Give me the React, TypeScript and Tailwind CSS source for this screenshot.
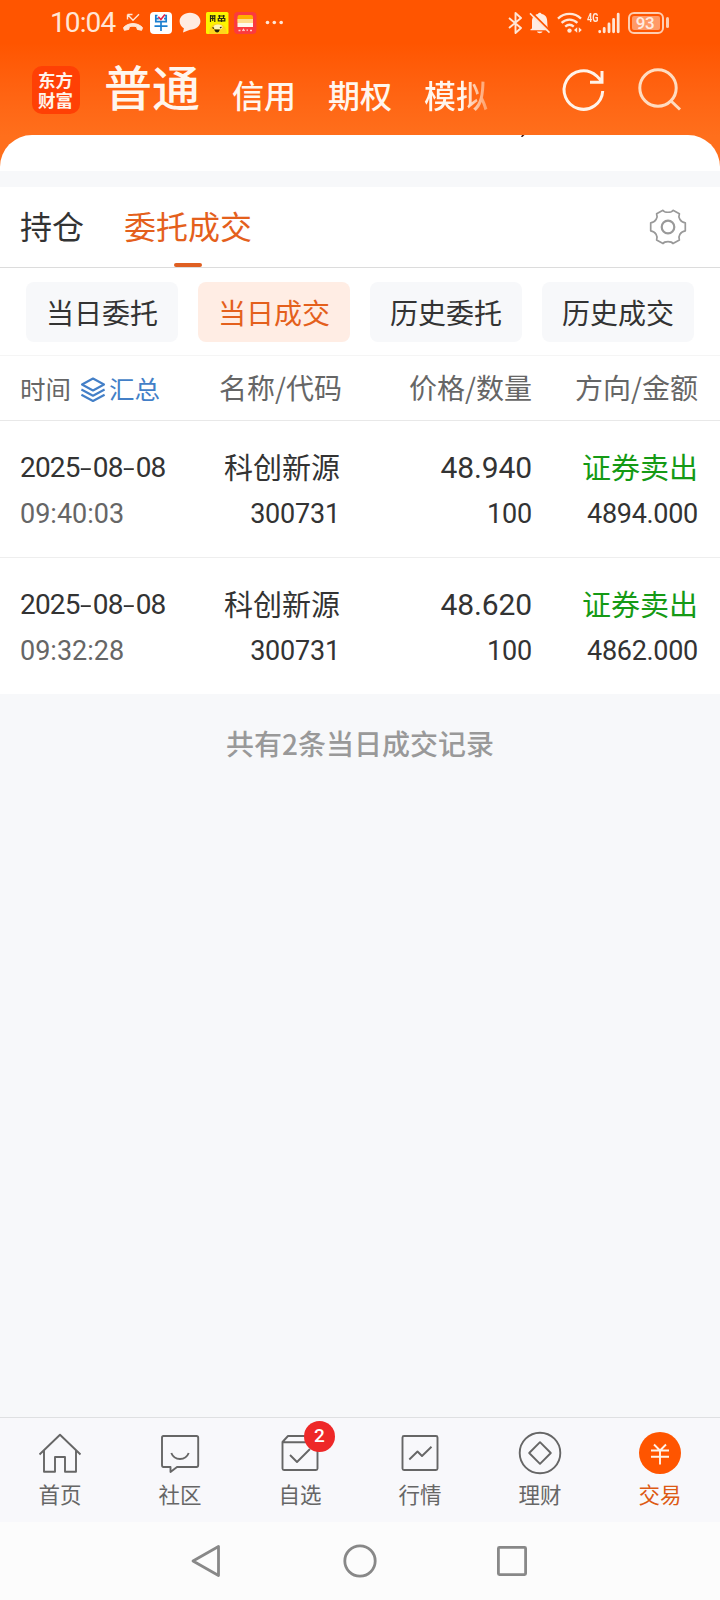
import React, { useState } from 'react';

interface Trade {
    id: number;
    date: string;
    time: string;
    name: string;
    code: string;
    price: string;
    amount: string;
    direction: string;
    total: string;
}

const TRADES: Trade[] = [
    { id: 1, date: '2025-08-08', time: '09:40:03', name: '科创新源', code: '300731', price: '48.940', amount: '100', direction: '证券卖出', total: '4894.000' },
    { id: 2, date: '2025-08-08', time: '09:32:28', name: '科创新源', code: '300731', price: '48.620', amount: '100', direction: '证券卖出', total: '4862.000' },
];

const FILTERS = ['当日委托', '当日成交', '历史委托', '历史成交'];

function StatusBar() {
    return (
        <div className="flex h-[45px] items-center pl-[50px] pr-[51px] text-[#ffe6d6]">
            <span className="font-['Roboto'] text-[28px] leading-[45px] w-[67px] tracking-[-0.9px] whitespace-nowrap">10:04</span>

            {/* Missed call */}
            <svg className="ml-[5px] shrink-0" width="22" height="20" viewBox="0 0 22 20" fill="none">
                <path d="M5.5 1.5v5M5.500 1.500h5M5.800 1.800l5.200 5.400 6-6" stroke="currentColor" strokeWidth="1.400" />
                <path d="M1.500 14.600c4.800-5.400 14.200-5.400 19 0l-.9 2.700-4.300-.9-.7-2.600c-2.300-.8-4.900-.8-7.200 0l-.7 2.600-4.300.9z" fill="currentColor" stroke="currentColor" strokeLinejoin="round" />
            </svg>

            {/* Order app */}
            <svg className="ml-[6px] shrink-0" width="22" height="22" viewBox="0 0 22 22" fill="none">
                <rect width="22" height="22" rx="4" fill="#fff" />
                <path d="M7.500 3.500H5.800v6.200h10.400V3.500h-1.400M5.800 6.600h3M14 6.600h2.200M4.500 14.200h13M11 9.700v9.300" stroke="#1b7fd0" strokeWidth="1.700" />
                <path d="M8.300 4.800l2.600 2.700 4-5" stroke="#e2224e" strokeWidth="1.600" />
            </svg>

            {/* Chat bubble */}
            <svg className="ml-[7px] shrink-0" width="22" height="21" viewBox="0 0 22 21">
                <path d="M11 .8c5.800 0 10.400 3.700 10.400 8.500s-4.600 8.500-10.400 8.500L4 20.600l.9-4.300C2.200 14.800.6 12.200.6 9.300.6 4.500 5.200.8 11 .8z" fill="#ffece2" />
            </svg>

            {/* Yellow mascot app */}
            <svg className="ml-[5px] shrink-0" width="23" height="22" viewBox="0 0 23 22" fill="none">
                <rect width="22.500" height="22" rx="1.500" fill="#fdf500" />
                <path d="M4.500 3v7M4.500 3.800h5M8.800 3v7M6.700 4v5M4.500 6.500h4M12 4h7M13.500 3v3M17.500 3v3M12.300 6.500h6.500v2.300h-6.500zM15.500 6v4" stroke="#2b2a10" strokeWidth="1.200" />
                <path d="M3 22c0-6 3-10.500 8.500-10.500S21 15.500 21 22z" fill="#ffd51c" />
                <ellipse cx="12" cy="15" rx="4.500" ry="2.500" fill="#fff7b8" />
                <path d="M6.500 15.500l1.500 1M14 16l1.500-1M9 18c1.200 2.600 3.200 2.600 4 0z" stroke="#26200a" strokeWidth="1.200" fill="#26200a" />
            </svg>

            {/* Red wallet app */}
            <svg className="ml-[5px] shrink-0" width="23" height="22" viewBox="0 0 23 22" fill="none">
                <rect width="22.500" height="22" rx="4" fill="#fb3a3e" />
                <path d="M3.500 10V5a2 2 0 0 1 2-2h11.500a2 2 0 0 1 2 2v5z" fill="#ffb000" />
                <rect x="3.500" y="7" width="15.500" height="4" fill="#ffdc8c" />
                <rect x="3.500" y="11" width="15.500" height="4" fill="#fff8ec" />
                <path d="M4.500 18.500h2M8.500 19l1-1.500 1 1.500M12.500 18.200h1.500M16 18.500h2" stroke="#ffd0cf" strokeWidth="1.300" />
            </svg>

            <svg className="ml-[8px] shrink-0" width="19" height="5" viewBox="0 0 19 5" fill="currentColor">
                <circle cx="2.500" cy="2.500" r="1.800" />
                <circle cx="9.300" cy="2.500" r="1.800" />
                <circle cx="16.200" cy="2.500" r="1.800" />
            </svg>

            <div className="ml-auto flex items-center">
                {/* Bluetooth */}
                <svg width="15" height="22" viewBox="0 0 15 22" fill="none" stroke="currentColor" strokeWidth="1.900" strokeLinejoin="round">
                    <path d="M1 6l12 10-5.500 5V1l5.500 5L1 16" />
                </svg>
                {/* Muted bell */}
                <svg className="ml-[6px]" width="22" height="22" viewBox="0 0 22 22" fill="none">
                    <path d="M3 16.500V9.200C3 5 5.500 2.600 9 2c.5-1.600 3-1.600 3.600 0 3.500.6 5.600 3.200 5.600 7.200l.3 5.300 1.200 2.800v1H1.500v-1z" fill="#ffece2" />
                    <path d="M8 19.500h5.500c-.6 2.200-4.900 2.200-5.500 0z" fill="#ffece2" />
                    <path d="M2.400.4l19 19" stroke="#ff5500" strokeWidth="2" />
                    <path d="M1 1.400l19.500 19.200" stroke="currentColor" strokeWidth="1.500" />
                </svg>
                {/* Wifi */}
                <svg className="ml-[6px]" width="25" height="22" viewBox="0 0 25 22" fill="none" stroke="currentColor">
                    <path d="M1 6.600c6.500-6.200 16.500-6.200 23 0M4.600 10.800c4.600-4.300 11.200-4.300 15.800 0M8.200 14.600c2.600-2.300 6-2.300 8.600 0" strokeWidth="2.300" />
                    <circle cx="12.500" cy="18.600" r="2.200" fill="currentColor" stroke="none" />
                    <path d="M20.200 15.300v5.400l-3.200-2.700zM21.800 15.300v5.400l3-2.700z" fill="currentColor" stroke="none" />
                </svg>
                {/* 4G signal */}
                <span className="ml-[5px] -mt-[10px] font-['Roboto'] text-[13px] leading-[13px] font-bold w-[11px] whitespace-nowrap inline-block origin-left scale-x-[0.700]">4G</span>
                <svg width="22" height="22" viewBox="0 0 22 22" stroke="currentColor" strokeWidth="2.800" strokeLinecap="round">
                    <path d="M1.700 19.500v.3M6.200 16.500v3.300M11 12v7.800M15.600 7.500v12.300M20.200 2.200v17.600" />
                </svg>
                {/* Battery */}
                <div className="ml-[8px] flex items-center">
                    <div className="flex h-[22px] w-[36px] items-center justify-center rounded-[6px] border-2 border-[#ffcdb0] p-[2px]">
                        <span className="flex h-[14px] w-[28px] items-center justify-center rounded-[2px] bg-[#ff9a67] pr-[2px] font-['Roboto'] text-[17px] leading-[14px] font-medium tracking-[-0.500px] text-[#ffece2]">93</span>
                    </div>
                    <div className="ml-[2px] h-[11px] w-[3px] rounded-full bg-[#ffcdb0]"></div>
                </div>
            </div>
        </div>
    );
}

function Header() {
    return (
        <div className="bg-linear-to-b from-[#ff5500] from-25% to-[#ff6f1c] to-80% h-[171px] flex flex-col">
            <StatusBar />
            <div className="flex h-[90px] pl-[32px]">
                <div className="mt-[21px] flex h-[48px] w-[48px] shrink-0 items-center justify-center rounded-[10px] bg-[#ff4005]">
                    <span className="w-[36px] break-all text-[17.500px] leading-[20px] font-bold text-[#fff3ea]">东方财富</span>
                </div>
                <div className="ml-[24px] flex items-start text-[#fff6ee]">
                    <span className="mt-[10px] text-[48px] leading-[60px] font-medium">普通</span>
                    <span className="ml-[32px] mt-[29px] text-[32px] leading-[40px] font-medium">信用</span>
                    <span className="ml-[32px] mt-[29px] text-[32px] leading-[40px] font-medium">期权</span>
                    <span className="ml-[32px] mt-[29px] text-[32px] leading-[40px] font-medium bg-linear-to-r from-[#fff6ee] from-60% to-[#ff9a60] bg-clip-text text-transparent">模拟</span>
                </div>
                <svg className="ml-[72px] mt-[21px]" width="46" height="48" viewBox="0 0 46 48" fill="none" stroke="#fff3ea" strokeWidth="3">
                    <path d="M42.700 25A19.300 19.300 0 1 1 36.500 9.800L42 15.500M42 5V16.300H30" />
                </svg>
                <svg className="ml-[30px] mt-[21px]" width="46" height="48" viewBox="0 0 46 48" fill="none" stroke="#ffdcc0" strokeWidth="3">
                    <circle cx="22" cy="22" r="18.200" />
                    <path d="M34.500 34.500L44 43.500" />
                </svg>
            </div>
            <div className="relative h-[36px] rounded-t-[32px] bg-white">
                <svg className="absolute left-[521px] top-0" width="4" height="2" viewBox="0 0 4 2">
                    <path d="M1 0h2.500L1.500 2H0z" fill="#4a1c10" />
                </svg>
            </div>
        </div>
    );
}

function GearIcon() {
    return (
        <svg width="38" height="38" viewBox="0 0 38 38" fill="none" stroke="#999" strokeWidth="1.700" strokeLinejoin="round">
            <path d="M14 2.300C15.500 4.900 22.500 4.900 24 2.300L30.400 5.800C28.800 9.500 31.500 14.300 36.300 14.800V22.900C31.500 23.400 28.800 28.200 30.400 32L24 35.500C22.500 32.900 15.500 32.900 14 35.500L7.600 32C9.200 28.200 6.500 23.400 1.700 22.900V14.800C6.500 14.300 9.200 9.500 7.600 5.800Z" />
            <circle cx="19" cy="19" r="6.300" strokeWidth="2.200" />
        </svg>
    );
}

function LayersIcon() {
    return (
        <svg width="26" height="26" viewBox="0 0 26 26" fill="none" stroke="#437fc7" strokeWidth="2.100" strokeLinejoin="round">
            <path d="M13 1.500L24 7.500 13 13.500 2 7.500Z" />
            <path d="M1.400 12.500L13 18.700 24.600 12.500M1.400 17.800L13 24 24.600 17.800" />
        </svg>
    );
}

// The hyphens are stretched to keep them nearly as wide as the digits
function DateText({ value }: { value: string }) {
    const parts = value.split('-');
    return (
        <span className="font-['Roboto'] text-[28px] tracking-[-0.800px] whitespace-nowrap">
            {parts.map((part, i) => (
                <React.Fragment key={i}>
                    {i > 0 && <span className="inline-block w-[13px] text-center tracking-normal"><span className="inline-block scale-x-[1.500] scale-y-[0.850]">-</span></span>}
                    {part}
                </React.Fragment>
            ))}
        </span>
    );
}

function TradeRow({ trade }: { trade: Trade }) {
    return (
        <div className="grid h-[137px] grid-cols-[200px_140px_192px_166px] border-b border-[#eee] pt-[24px] text-[#333] last:h-[136px] last:border-b-0">
            <div className="flex flex-col pl-[20px]">
                <div className="h-[46px] leading-[46px]"><DateText value={trade.date} /></div>
                <div className="h-[46px] font-['Roboto'] text-[27px] leading-[47px] text-[#666]">{trade.time}</div>
            </div>
            <div className="flex flex-col text-right">
                <div className="h-[46px] text-[29px] leading-[42px]">{trade.name}</div>
                <div className="h-[46px] font-['Roboto'] text-[27px] leading-[47px] tracking-[-0.200px]">{trade.code}</div>
            </div>
            <div className="flex flex-col text-right font-['Roboto']">
                <div className="h-[46px] text-[30px] leading-[46px] tracking-[-0.100px]">{trade.price}</div>
                <div className="h-[46px] text-[27px] leading-[47px] tracking-[-0.200px]">{trade.amount}</div>
            </div>
            <div className="flex flex-col text-right">
                <div className="h-[46px] text-[29px] leading-[42px] text-[#159a15]">{trade.direction}</div>
                <div className="h-[46px] font-['Roboto'] text-[27px] leading-[47px] tracking-[-0.300px]">{trade.total}</div>
            </div>
        </div>
    );
}

const TABS = [
    {
        label: '首页',
        icon: <path d="M1.500 23.500L22 3.800 42.500 23.500M6 19.500V40.800H17V26H27V40.800H38V19.500" />,
    },
    {
        label: '社区',
        icon: (
            <>
                <path d="M5.500 5H38.500Q40.200 5 40.200 6.700V34Q40.200 36 38.500 36H19L12.500 41V36H5.500Q4 36 4 34V6.700Q4 5 5.500 5Z" />
                <path d="M13.300 22C16.500 30 27.500 30 30.700 22" />
            </>
        ),
    },
    {
        label: '自选',
        badge: 2,
        icon: (
            <>
                <path d="M4.500 11L10 5H36L39.500 11V37.500Q39.500 39 38 39H6Q4.500 39 4.500 37.500ZM4.500 11.200H39.500" />
                <path d="M12 24L19 31 32 18" />
            </>
        ),
    },
    {
        label: '行情',
        icon: (
            <>
                <rect x="4.500" y="5" width="35" height="34" rx="1.500" />
                <path d="M11.300 28.500L19.500 20.500 24 25 33.500 15.800" />
            </>
        ),
    },
    {
        label: '理财',
        icon: (
            <>
                <circle cx="22" cy="22" r="20.300" />
                <path d="M22 11.200L32.800 22 22 32.800 11.200 22Z" />
            </>
        ),
    },
    {
        label: '交易',
        active: true,
        icon: (
            <>
                <circle cx="22" cy="22" r="21" fill="#ff5500" stroke="none" />
                <path d="M16 13.500L22 19.500 28 13.500M13 19.500H31M13 25.800H31M22 19.500V33.500" stroke="#fff3ea" />
            </>
        ),
    },
];

function TabBar() {
    return (
        <div className="grid h-[105px] grid-cols-6 border-t border-[#dfe0e2] bg-[#f8f8fb]">
            {TABS.map(tab => (
                <div key={tab.label} className={`flex flex-col items-center pt-[13px] ${tab.active ? 'text-[#dd5a14]' : 'text-[#666]'}`}>
                    <div className="relative">
                        <svg width="44" height="44" viewBox="0 0 44 44" fill="none" stroke="currentColor" strokeWidth="1.900" strokeLinejoin="round">
                            {tab.icon}
                        </svg>
                        {tab.badge && (
                            <span className="absolute -right-[13px] -top-[10px] flex h-[31px] w-[31px] items-center justify-center rounded-full bg-[#ee2828] font-['Roboto'] text-[19px] font-medium text-white">
                                {tab.badge}
                            </span>
                        )}
                    </div>
                    <span className="mt-[3px] text-[21.500px] leading-[32px]">{tab.label}</span>
                </div>
            ))}
        </div>
    );
}

function SystemNav() {
    return (
        <div className="flex h-[78px] items-center bg-[#fcfcfc] pl-[188px]">
            <svg width="344" height="36" viewBox="0 0 344 36" fill="none" stroke="#888" strokeWidth="2.800" strokeLinejoin="round">
                <path d="M5 18L30.500 3.500V32.500Z" />
                <circle cx="172" cy="18" r="15.200" />
                <rect x="310.400" y="4.400" width="27.200" height="27.200" rx="1" />
            </svg>
        </div>
    );
}

export default function App() {
    const [filter, setFilter] = useState('当日成交');

    return (
        <div className="flex h-[1600px] w-[720px] flex-col overflow-hidden bg-[#f7f8fa] font-['Noto_Sans_CJK_SC',sans-serif]">
            <Header />

            <div className="mt-[16px] bg-white">
                {/* Main tabs */}
                <div className="flex h-[81px] items-start border-b border-[#dcdcdc] pl-[20px] text-[32px] leading-[76px]">
                    <span className="text-[#333]">持仓</span>
                    <div className="relative ml-[40px] text-[#e4601c]">
                        委托成交
                        <span className="absolute left-[50px] top-[76px] h-[4px] w-[28px] rounded-[2px] bg-[#df5f22]"></span>
                    </div>
                    <div className="ml-auto mr-[33px] mt-[21px]"><GearIcon /></div>
                </div>

                {/* Filters */}
                <div className="flex h-[88px] gap-5 border-b border-[#f5f5f5] pl-[26px] pt-[14px]">
                    {FILTERS.map(item => (
                        <button
                            key={item}
                            onClick={() => setFilter(item)}
                            className={`h-[60px] w-[152px] rounded-lg text-[28px] leading-[58px] ${filter === item ? 'bg-[#ffede4] text-[#e4601c]' : 'bg-[#f7f8fa] text-[#333]'}`}
                        >
                            {item}
                        </button>
                    ))}
                </div>

                {/* Column titles */}
                <div className="grid h-[65px] grid-cols-[200px_142px_190px_166px] border-b border-[#e8e8e8] text-[28px] leading-[62px] text-[#666]">
                    <div className="flex items-center pl-[20px] text-[25.500px]">
                        <span>时间</span>
                        <span className="ml-[9px] mr-[3px] mt-[3px]"><LayersIcon /></span>
                        <span className="text-[#437fc7]">汇总</span>
                    </div>
                    <span className="text-right">名称/代码</span>
                    <span className="text-right">价格/数量</span>
                    <span className="text-right">方向/金额</span>
                </div>

                {TRADES.map(trade => (
                    <TradeRow key={trade.id} trade={trade} />
                ))}
            </div>

            <p className="mt-[28px] text-center text-[28px] leading-[42px] font-medium text-[#999]">共有{TRADES.length}条当日成交记录</p>

            <div className="mt-auto">
                <TabBar />
                <SystemNav />
            </div>
        </div>
    );
}
